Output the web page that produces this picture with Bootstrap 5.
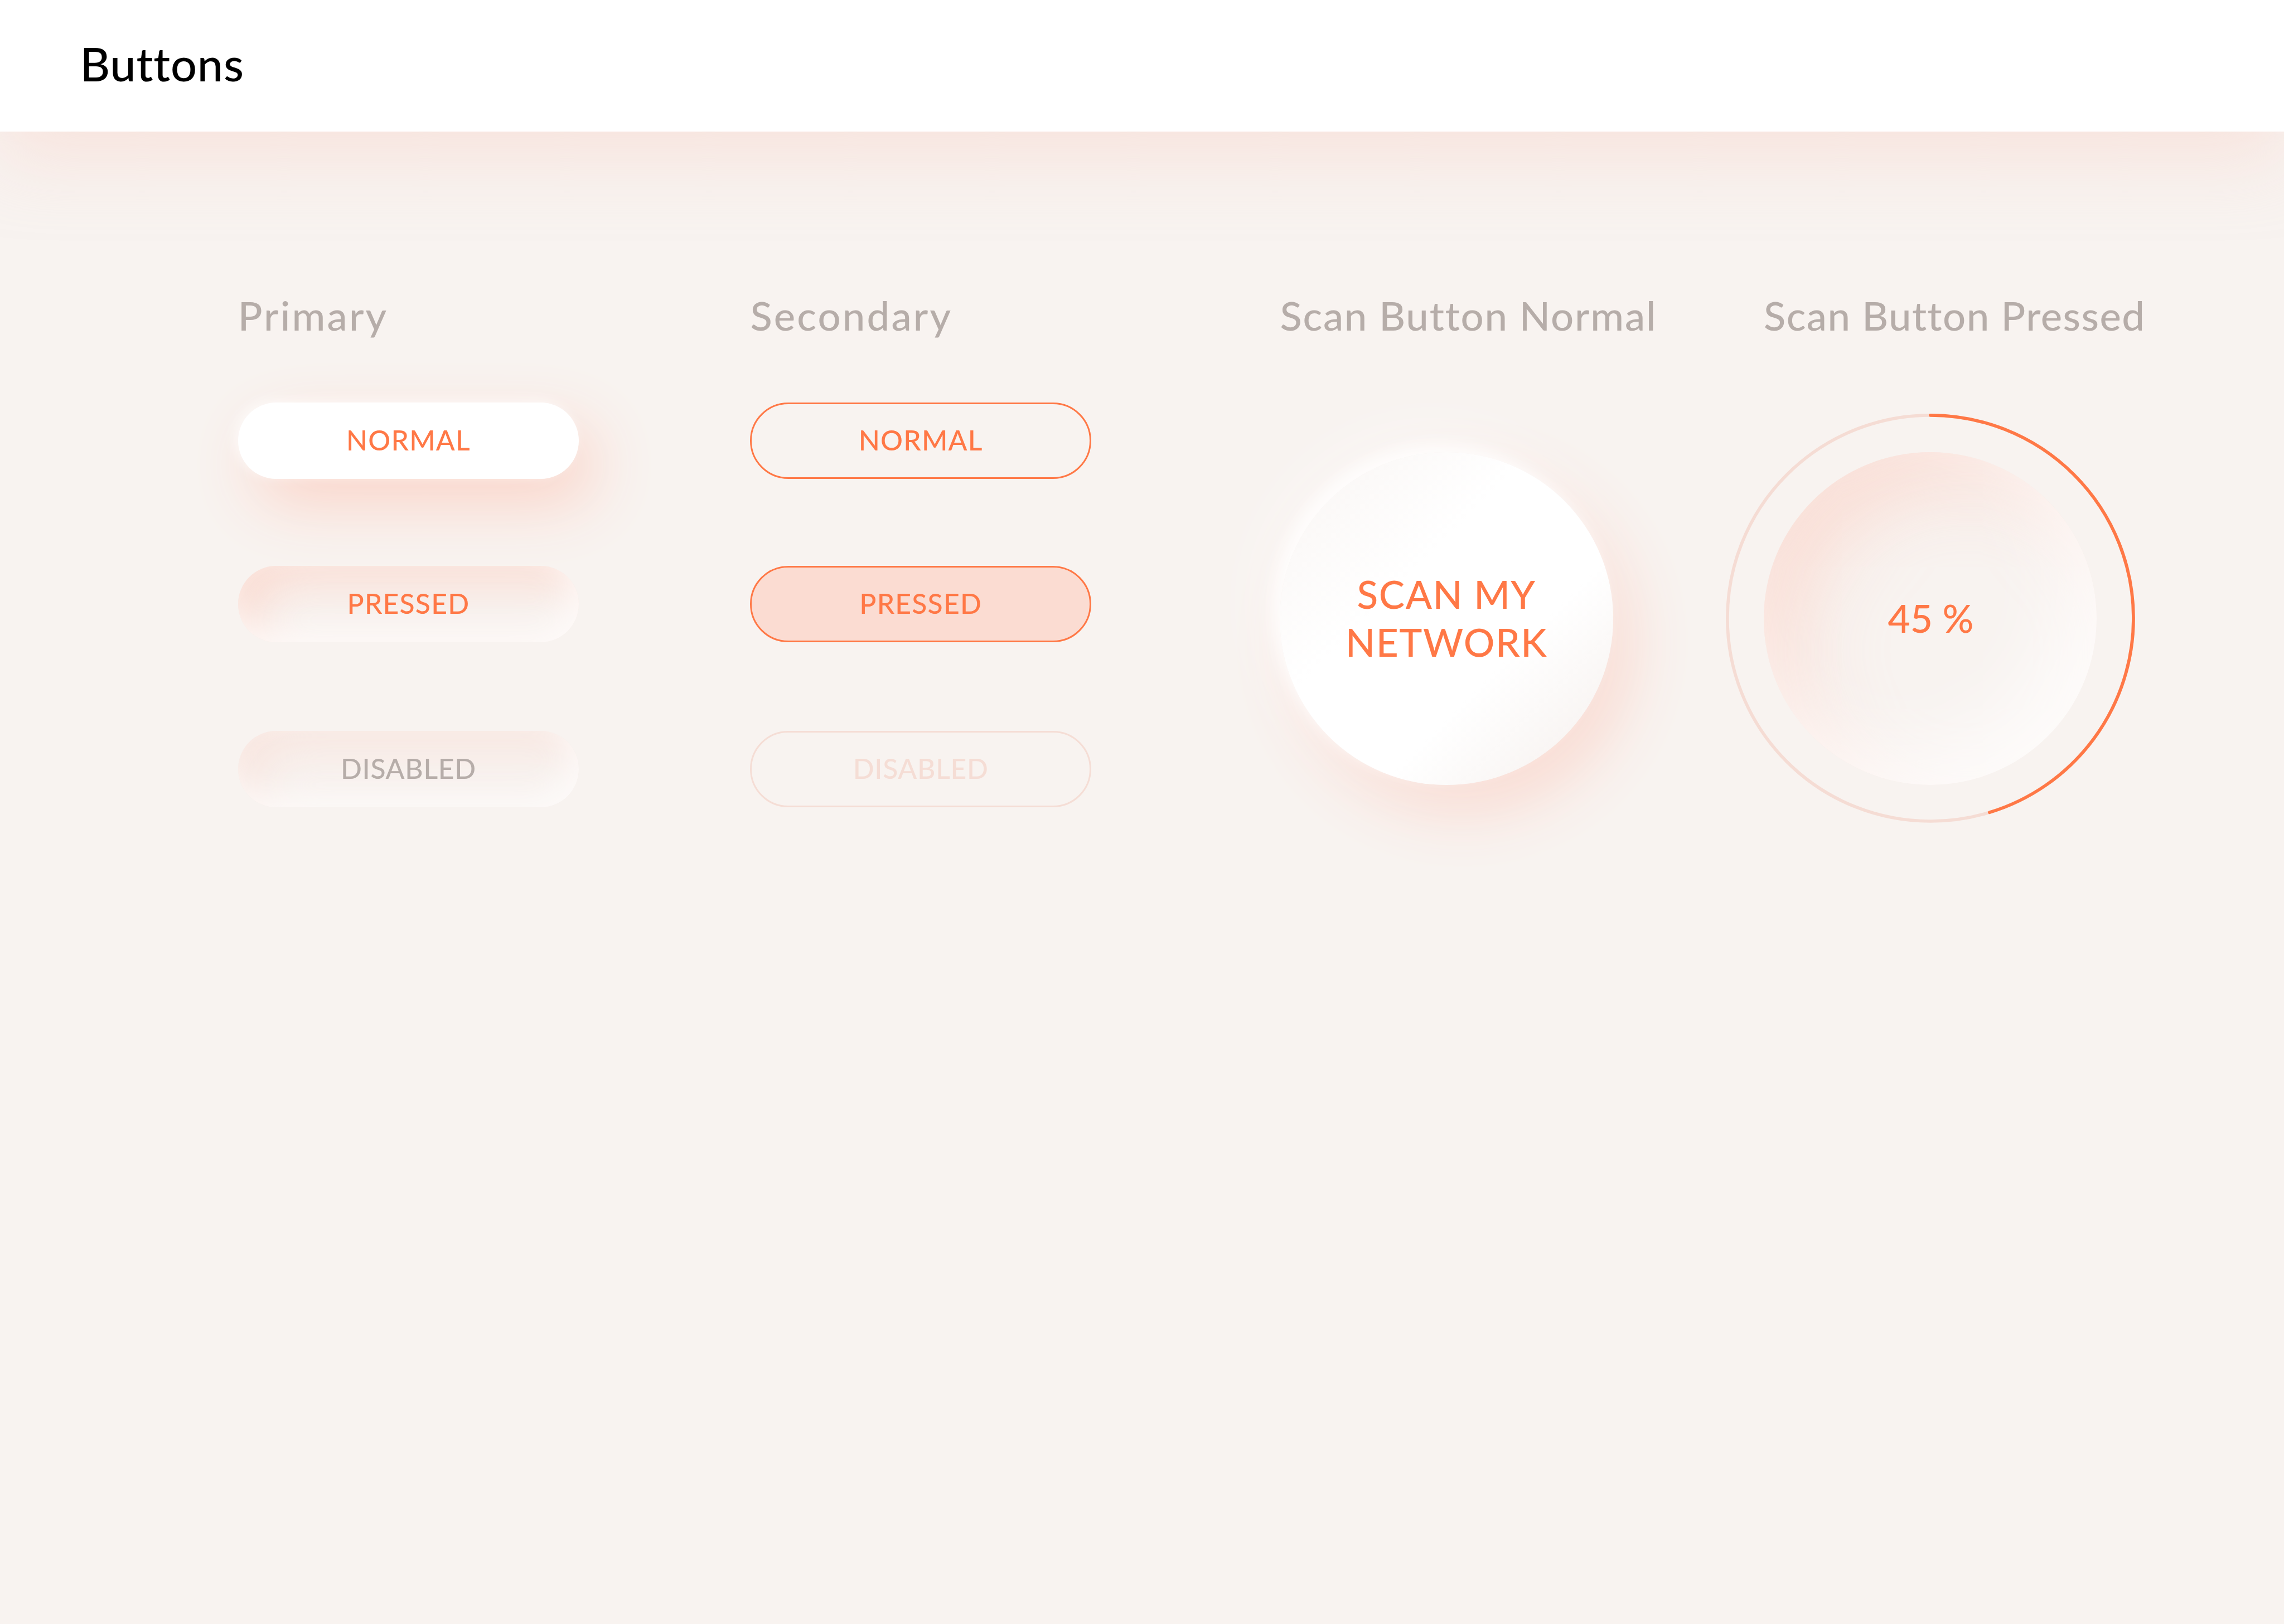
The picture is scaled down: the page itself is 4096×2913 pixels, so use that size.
<!DOCTYPE html>
<html lang="en">
<head>
  <meta charset="UTF-8">
  <title>Buttons</title>
  <link href="https://cdn.jsdelivr.net/npm/bootstrap@5.3.2/dist/css/bootstrap.min.css" rel="stylesheet">
  <style>
    /* 1rem = 16px of the 1440px wide artboard */
    html {
      font-size: 45.5111px;
    }
    body {
      background-color: #f8f3f0;
      font-family: Lato, sans-serif;
      font-weight: 500;
    }
    .top-bar {
      height: 5.1875rem;
      padding: 0 0 .17rem 3.155rem;
      background-color: #fff;
      box-shadow: 0 .9375rem 2.8rem rgba(249, 212, 202, .5);
    }
    .top-title {
      font-size: 1.82rem;
      font-weight: 500;
      line-height: 1;
      letter-spacing: .01em;
      color: #000;
    }
    .board {
      display: grid;
      grid-template-columns: 20.1875rem 20.875rem 19.0625rem auto;
      padding: 6.23rem 0 0 9.375rem;
    }
    .col-label {
      height: 4.457rem;
      margin: 0;
      font-size: 1.591rem;
      font-weight: 500;
      line-height: 2rem;
      color: #b6ada9;
      white-space: nowrap;
    }
    .label-wide { letter-spacing: .044em; }
    .label-scan { letter-spacing: .025em; }
    .label-scan-pressed { letter-spacing: .0205em; }

    .pill {
      width: 13.4375rem;
      height: 3rem;
      padding: 0 0 .04rem;
      border: 0;
      font-size: 1.096rem;
      font-weight: 500;
      line-height: 1;
      letter-spacing: .024em;
      color: #ff7846;
    }
    .pill + .pill { margin-top: 3.4375rem; }
    .pill + .pill-off { margin-top: 3.5rem; }
    .pill-normal {
      background-color: #fff;
      box-shadow:
        -.15rem -.1rem .5rem rgba(255, 255, 255, .65),
        .625rem .9375rem 2.5rem #fbd3c7;
    }
    .pill-pressed {
      box-shadow:
        inset -.4rem -.5rem 1.25rem rgba(255, 255, 255, .75),
        inset .625rem .625rem 1.875rem rgba(251, 211, 199, .75);
    }
    .pill-off {
      letter-spacing: .014em;
      color: #b6ada9;
      box-shadow:
        inset -.4rem -.5rem 1.25rem rgba(255, 255, 255, .7),
        inset .625rem .625rem 1.875rem rgba(250, 215, 206, .5);
    }
    .pill-line { border: 3px solid #ff7846; }
    .pill-line.pill-pressed { background-color: #fbdcd2; box-shadow: none; }
    .pill-line.pill-off { color: #f5ddd5; border-color: #f5ddd5; box-shadow: none; }

    .scan {
      width: 13.125rem;
      height: 13.125rem;
      padding: 0 0 .02rem;
      border: 0;
      font-size: 1.525rem;
      font-weight: 500;
      line-height: 1.875rem;
      letter-spacing: .022em;
      color: #ff7846;
    }
    .scan-normal {
      margin-top: 1.9375rem;
      background: linear-gradient(135deg, #f9f5f3 0%, #fff 38%, #fff 65%, #f5efec 100%);
      box-shadow:
        -.3rem -.3rem .625rem rgba(255, 255, 255, .8),
        -.625rem -.625rem 2.5rem rgba(255, 255, 255, .5),
        .625rem .9375rem 2.5rem #fad8ce;
    }
    .scan-pressed {
      padding-left: .04rem;
      letter-spacing: 0;
      box-shadow:
        inset -1.25rem -1.25rem 3.125rem rgba(255, 255, 255, .8),
        inset 1.25rem 1.25rem 3.125rem rgba(251, 211, 199, .7);
    }
    /* the ring is wider than its button, so it hangs out to the left */
    .ring {
      display: grid;
      place-items: center;
      width: 16.125rem;
      height: 16.125rem;
      margin: .4375rem 0 0 -1.5rem;
    }
    .ring > * { grid-area: 1 / 1; }
  </style>
</head>
<body class="d-flex flex-column min-vh-100">

<header class="top-bar d-flex align-items-center">
  <h1 class="top-title m-0">Buttons</h1>
</header>

<main class="board flex-grow-1">
  <section class="d-flex flex-column align-items-start">
    <h2 class="col-label label-wide">Primary</h2>
    <button type="button" class="btn pill pill-normal rounded-pill">NORMAL</button>
    <button type="button" class="btn pill pill-pressed rounded-pill">PRESSED</button>
    <button type="button" class="btn pill pill-off rounded-pill">DISABLED</button>
  </section>

  <section class="d-flex flex-column align-items-start">
    <h2 class="col-label label-wide">Secondary</h2>
    <button type="button" class="btn pill pill-line rounded-pill">NORMAL</button>
    <button type="button" class="btn pill pill-line pill-pressed rounded-pill">PRESSED</button>
    <button type="button" class="btn pill pill-line pill-off rounded-pill">DISABLED</button>
  </section>

  <section>
    <h2 class="col-label label-scan">Scan Button Normal</h2>
    <button type="button" class="btn scan scan-normal rounded-circle">SCAN MY<br>NETWORK</button>
  </section>

  <section>
    <h2 class="col-label label-scan-pressed">Scan Button Pressed</h2>
    <div class="ring">
      <svg class="w-100 h-100" viewBox="0 0 258 258" fill="none" stroke-width="2">
        <circle cx="129" cy="129" r="128" stroke="#f5dcd4"/>
        <circle cx="129" cy="129" r="128" stroke="#ff7846" stroke-linecap="round" pathLength="100" stroke-dasharray="45.3 100" transform="rotate(-90 129 129)"/>
      </svg>
      <button type="button" class="btn scan scan-pressed rounded-circle">45 %</button>
    </div>
  </section>
</main>

<script src="https://cdn.jsdelivr.net/npm/bootstrap@5.3.2/dist/js/bootstrap.bundle.min.js"></script>
</body>
</html>
